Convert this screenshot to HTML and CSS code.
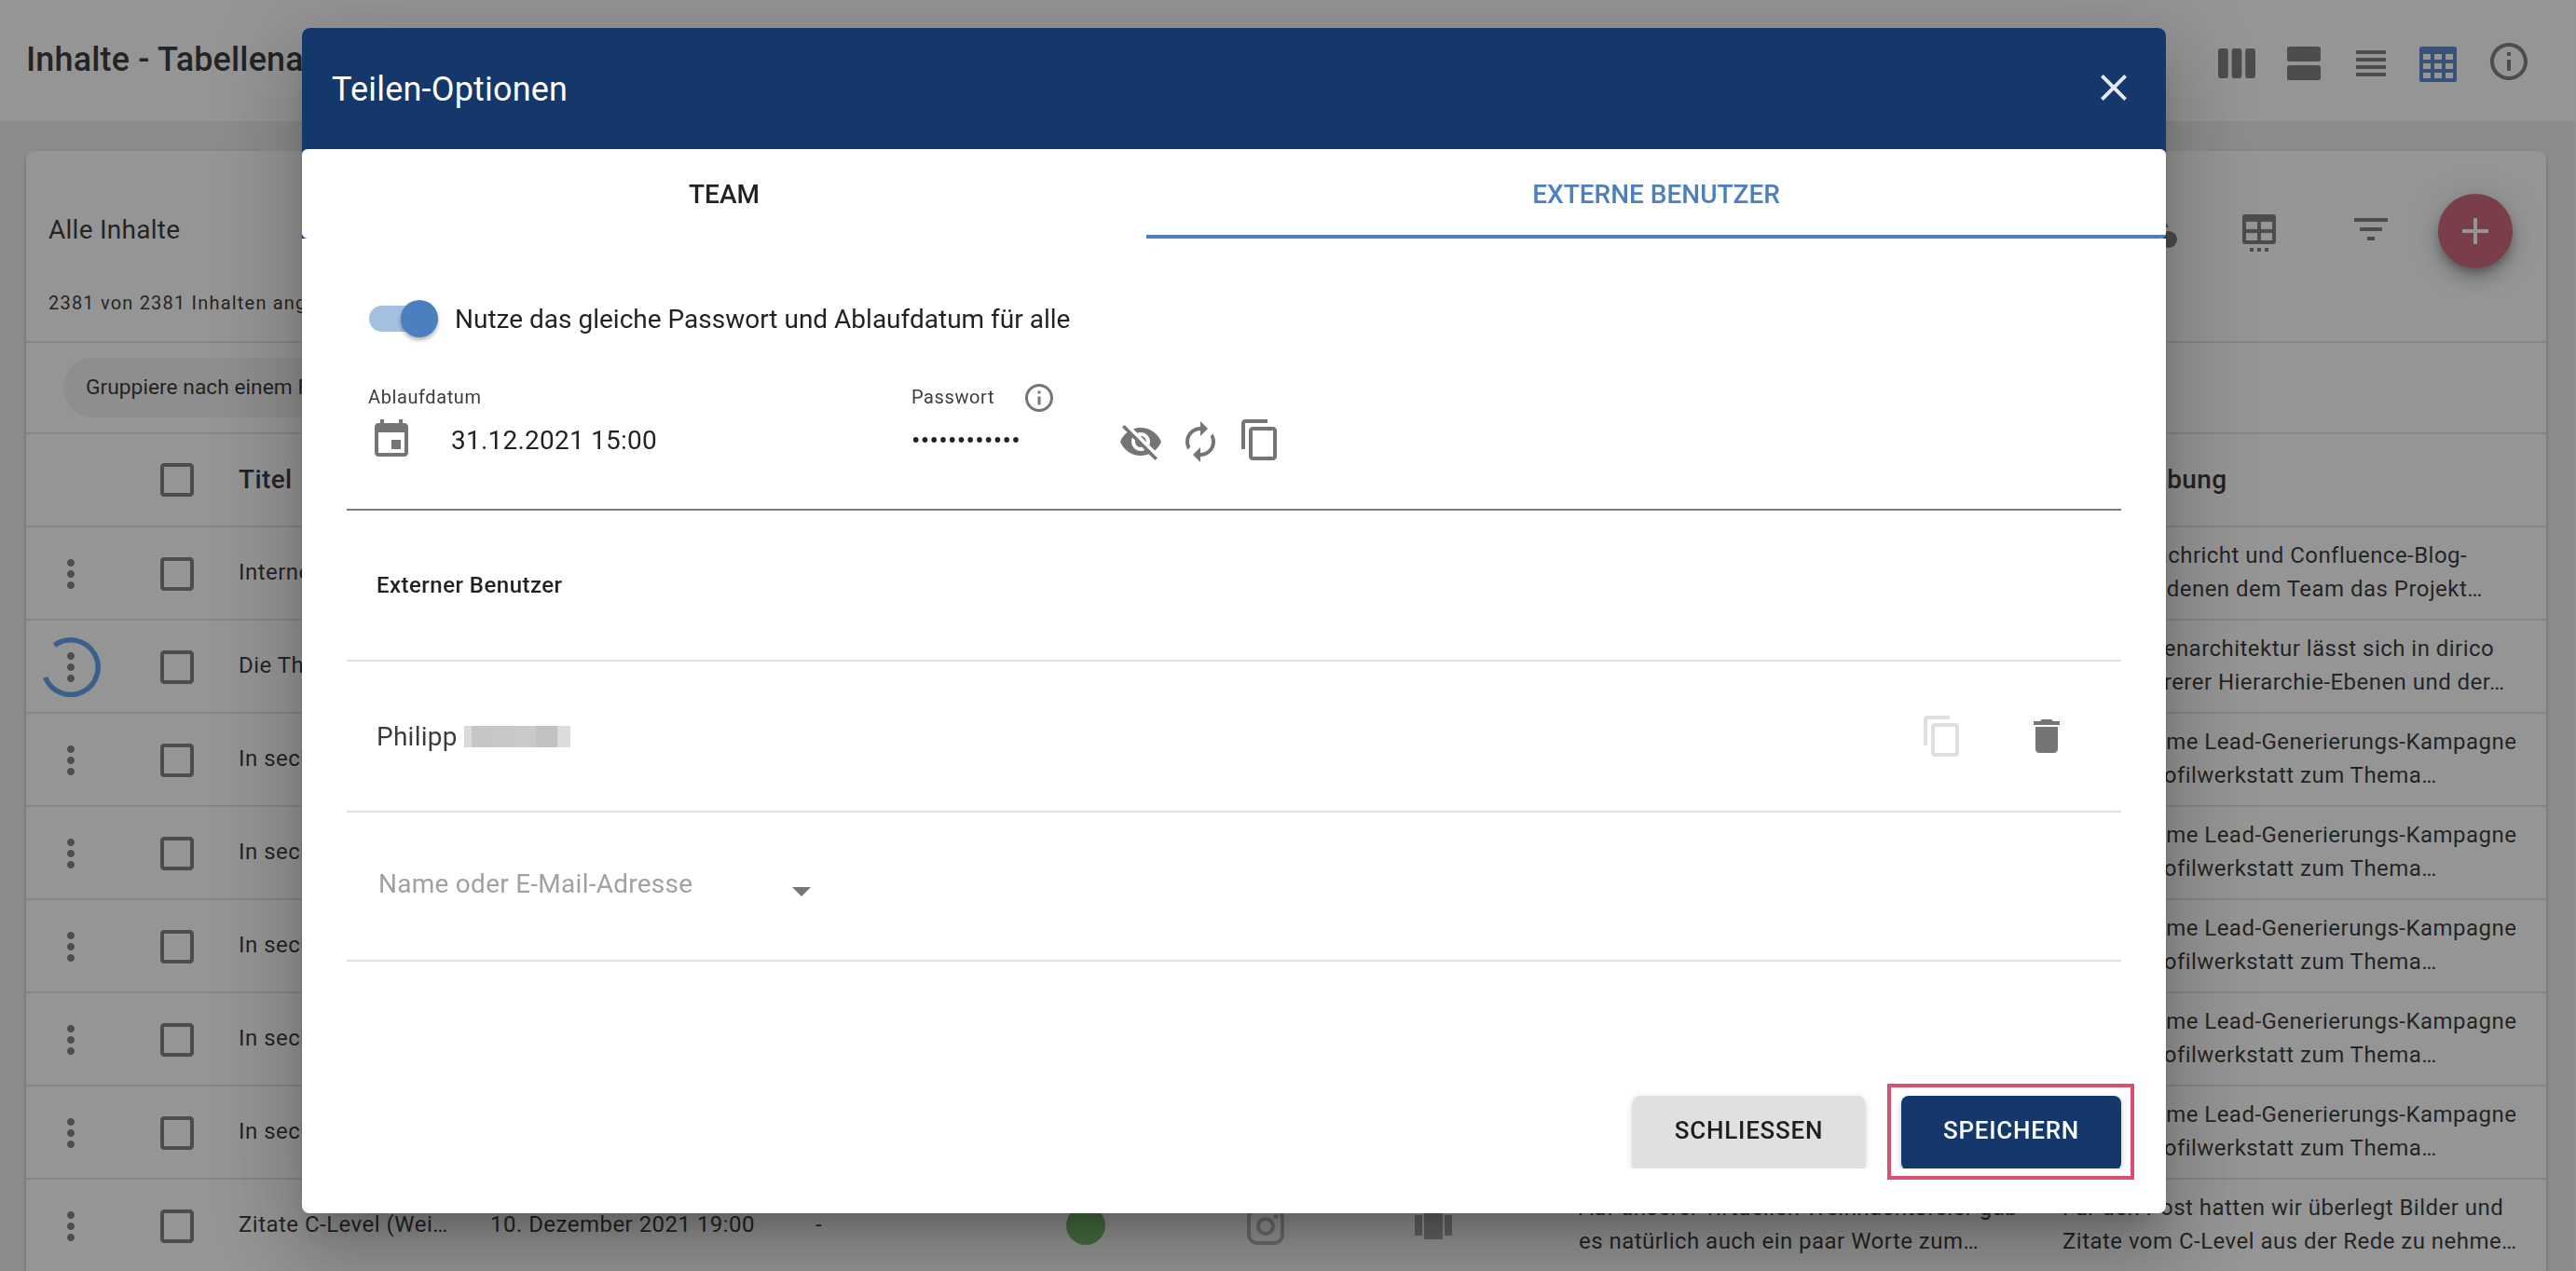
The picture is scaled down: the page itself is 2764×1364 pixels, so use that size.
FILE: index.html
```html
<!DOCTYPE html>
<html lang="de">
<head>
  <meta charset="UTF-8" />
  <title>Inhalte - Tabellenansicht</title>
  <link rel="stylesheet" href="styles.css">
</head>
<body>
  <svg class="sprite">
    <symbol id="dots" viewBox="0 0 24 24"><path d="M12 8c1.1 0 2-.9 2-2s-.9-2-2-2-2 .9-2 2 .9 2 2 2zm0 2c-1.1 0-2 .9-2 2s.9 2 2 2 2-.9 2-2-.9-2-2-2zm0 6c-1.1 0-2 .9-2 2s.9 2 2 2 2-.9 2-2-.9-2-2-2z"/></symbol>
    <symbol id="box" viewBox="0 0 24 24"><path d="M19 5v14H5V5h14m0-2H5c-1.1 0-2 .9-2 2v14c0 1.1.9 2 2 2h14c1.1 0 2-.9 2-2V5c0-1.1-.9-2-2-2z"/></symbol>
    <symbol id="info" viewBox="0 0 24 24"><path d="M11 7h2v2h-2zm0 4h2v6h-2zm1-9C6.48 2 2 6.48 2 12s4.480 10 10 10 10-4.480 10-10S17.520 2 12 2zm0 18c-4.410 0-8-3.590-8-8s3.590-8 8-8 8 3.590 8 8-3.590 8-8 8z"/></symbol>
    <symbol id="copy" viewBox="0 0 24 24"><path d="M16 1H4c-1.1 0-2 .9-2 2v14h2V3h12V1zm3 4H8c-1.1 0-2 .9-2 2v14c0 1.1.9 2 2 2h11c1.1 0 2-.9 2-2V7c0-1.1-.9-2-2-2zm0 16H8V7h11v14z"/></symbol>
  </svg>

  <header class="topbar">
    <h1>Inhalte - Tabellenansicht</h1>
    <div class="views">
      <svg class="icon" viewBox="0 0 24 24"><rect x="2" y="4" width="5.4" height="16" rx="1.500"/><rect x="9.300" y="4" width="5.400" height="16" rx="1.500"/><rect x="16.600" y="4" width="5.400" height="16" rx="1.500"/></svg>
      <svg class="icon" viewBox="0 0 24 24"><rect x="3" y="3" width="18" height="8" rx="1.300"/><rect x="3" y="13" width="18" height="8" rx="1.300"/></svg>
      <svg class="icon" viewBox="0 0 24 24"><path d="M4 5h16v2H4zM4 9h16v2H4zM4 13h16v2H4zM4 17h16v2H4z"/></svg>
      <svg class="icon active" viewBox="0 0 24 24"><path fill-rule="evenodd" d="M3 3h18a1 1 0 0 1 1 1v17a1 1 0 0 1-1 1H3a1 1 0 0 1-1-1V4a1 1 0 0 1 1-1zM4 7v3h4V7zM10 7v3h4V7zM16 7v3h4V7zM4 12v3h4v-3zM10 12v3h4v-3zM16 12v3h4v-3zM4 17v3h4v-3zM10 17v3h4v-3zM16 17v3h4v-3z"/></svg>
      <svg class="icon info"><use href="#info"/></svg>
    </div>
  </header>

  <main class="card">
    <div class="toolbar">
      <div class="heading">
        <h2>Alle Inhalte</h2>
        <p>2381 von 2381 Inhalten angezeigt</p>
      </div>
      <div class="tools">
        <svg class="icon" viewBox="0 0 24 24"><path d="M12 2l-5.500 9h11z"/><circle cx="17.500" cy="17.500" r="4.500"/><path d="M3 13.500h8v8H3z"/></svg>
        <svg class="icon" viewBox="0 0 24 24"><path fill-rule="evenodd" d="M4.500 4h15A1.500 1.500 0 0 1 21 5.500v13a1.500 1.500 0 0 1-1.500 1.500h-15A1.500 1.500 0 0 1 3 18.500v-13A1.500 1.500 0 0 1 4.500 4zM5 8v4h6V8zM13 8v4h6V8zM5 14v4h6v-4zM13 14v4h6v-4zM7 22h2v2H7zM11 22h2v2h-2zM15 22h2v2h-2z"/></svg>
        <svg class="icon" viewBox="0 0 24 24"><path d="M10 18h4v-2h-4v2zM3 6v2h18V6H3zm3 7h12v-2H6v2z"/></svg>
        <button class="fab"><svg class="icon" viewBox="0 0 24 24"><path d="M19 13h-6v6h-2v-6H5v-2h6V5h2v6h6v2z"/></svg></button>
      </div>
    </div>
    <div class="grouping"><span class="chip">Gruppiere nach einem Feld</span></div>

    <div class="row head">
      <svg class="icon check"><use href="#box"/></svg>
      <span class="title">Titel</span>
      <span class="desc">Beschreibung</span>
    </div>
    <div class="row">
      <svg class="icon menu"><use href="#dots"/></svg>
      <svg class="icon check"><use href="#box"/></svg>
      <span class="title">Internes Projekt</span>
      <span class="desc">Intranetnachricht und Confluence-Blog-<br>Beitrag in denen dem Team das Projekt…</span>
    </div>
    <div class="row">
      <div class="menu loading">
        <svg class="icon"><use href="#dots"/></svg>
        <svg class="spinner" viewBox="0 0 64 64"><path d="M14.500 8.500A29.300 29.300 0 1 1 4.600 43"/></svg>
      </div>
      <svg class="icon check"><use href="#box"/></svg>
      <span class="title">Die Themenarchitektur</span>
      <span class="desc">Eine Medienarchitektur lässt sich in dirico<br>nach mehrerer Hierarchie-Ebenen und der…</span>
    </div>
    <div class="row">
      <svg class="icon menu"><use href="#dots"/></svg>
      <svg class="icon check"><use href="#box"/></svg>
      <span class="title">In sechs Schritten</span>
      <span class="desc">Gemeinsame Lead-Generierungs-Kampagne<br>mit der Profilwerkstatt zum Thema…</span>
    </div>
    <div class="row">
      <svg class="icon menu"><use href="#dots"/></svg>
      <svg class="icon check"><use href="#box"/></svg>
      <span class="title">In sechs Schritten</span>
      <span class="desc">Gemeinsame Lead-Generierungs-Kampagne<br>mit der Profilwerkstatt zum Thema…</span>
    </div>
    <div class="row">
      <svg class="icon menu"><use href="#dots"/></svg>
      <svg class="icon check"><use href="#box"/></svg>
      <span class="title">In sechs Schritten</span>
      <span class="desc">Gemeinsame Lead-Generierungs-Kampagne<br>mit der Profilwerkstatt zum Thema…</span>
    </div>
    <div class="row">
      <svg class="icon menu"><use href="#dots"/></svg>
      <svg class="icon check"><use href="#box"/></svg>
      <span class="title">In sechs Schritten</span>
      <span class="desc">Gemeinsame Lead-Generierungs-Kampagne<br>mit der Profilwerkstatt zum Thema…</span>
    </div>
    <div class="row">
      <svg class="icon menu"><use href="#dots"/></svg>
      <svg class="icon check"><use href="#box"/></svg>
      <span class="title">In sechs Schritten</span>
      <span class="desc">Gemeinsame Lead-Generierungs-Kampagne<br>mit der Profilwerkstatt zum Thema…</span>
    </div>
    <div class="row">
      <svg class="icon menu"><use href="#dots"/></svg>
      <svg class="icon check"><use href="#box"/></svg>
      <span class="title">Zitate C-Level (Wei…</span>
      <span class="date">10. Dezember 2021 19:00</span>
      <span class="dash">-</span>
      <span class="status"></span>
      <svg class="channel" viewBox="0 0 40 40"><rect x="2" y="2" width="36" height="36" rx="9"/><circle cx="20" cy="20" r="8"/><circle class="lens" cx="31" cy="9.500" r="2.500"/></svg>
      <svg class="icon format" viewBox="0 0 24 24"><path d="M7 19h10V4H7v15zm-5-2h4V6H2v11zM18 6v11h4V6h-4z"/></svg>
      <span class="text">Auf unserer virtuellen Weihnachtsfeier gab<br>es natürlich auch ein paar Worte zum…</span>
      <span class="desc">Für den Post hatten wir überlegt Bilder und<br>Zitate vom C-Level aus der Rede zu nehme…</span>
    </div>
  </main>

  <div class="overlay">
    <div class="dialog">
      <div class="dialog-head">
        <span>Teilen-Optionen</span>
        <svg class="icon" viewBox="0 0 24 24"><path d="M19 6.410L17.590 5 12 10.590 6.410 5 5 6.410 10.590 12 5 17.590 6.410 19 12 13.410 17.590 19 19 17.590 13.410 12z"/></svg>
      </div>
      <div class="tabs-wrap">
        <div class="tabs">
          <div class="tab">TEAM</div>
          <div class="tab selected">EXTERNE BENUTZER</div>
        </div>
      </div>

      <div class="content">
        <div class="share">
          <div class="switch-line">
            <span class="switch"></span>
            <label>Nutze das gleiche Passwort und Ablaufdatum für alle</label>
          </div>
          <div class="fields">
            <div class="expiry">
              <div class="label">Ablaufdatum</div>
              <div class="value">
                <svg class="icon" viewBox="0 0 24 24"><path d="M17 12h-5v5h5v-5zM16 1v2H8V1H6v2H5c-1.110 0-1.990.9-1.990 2L3 19c0 1.100.890 2 2 2h14c1.100 0 2-.9 2-2V5c0-1.100-.9-2-2-2h-1V1h-2zm3 18H5V8h14v11z"/></svg>
                <span>31.12.2021 15:00</span>
              </div>
            </div>
            <div class="password">
              <div class="label">Passwort <svg class="icon small"><use href="#info"/></svg></div>
              <div class="bullets">••••••••••••</div>
            </div>
            <div class="actions">
              <svg class="icon" viewBox="0 0 24 24"><path d="M12 7c2.760 0 5 2.240 5 5 0 .650-.130 1.260-.360 1.830l2.920 2.920c1.510-1.260 2.700-2.890 3.430-4.750-1.730-4.390-6-7.500-11-7.500-1.400 0-2.740.250-3.980.7l2.160 2.160C10.740 7.130 11.350 7 12 7zM2 4.270l2.280 2.280.460.460C3.080 8.300 1.780 10.020 1 12c1.730 4.390 6 7.500 11 7.500 1.550 0 3.030-.3 4.380-.840l.420.420L19.730 22 21 20.730 3.270 3 2 4.270zM7.530 9.800l1.550 1.550c-.050.210-.080.430-.080.650 0 1.660 1.340 3 3 3 .220 0 .440-.030.650-.080l1.550 1.550c-.670.330-1.410.530-2.200.530-2.760 0-5-2.240-5-5 0-.790.2-1.530.530-2.200zm4.310-.780l3.150 3.150.020-.160c0-1.660-1.340-3-3-3l-.170.010z"/></svg>
              <svg class="icon" viewBox="0 0 24 24"><path d="M12 6v3l4-4-4-4v3c-4.420 0-8 3.580-8 8 0 1.570.460 3.030 1.240 4.260L6.700 14.800c-.450-.830-.7-1.790-.7-2.800 0-3.310 2.690-6 6-6zm6.760 1.740L17.300 9.200c.440.840.7 1.790.7 2.800 0 3.310-2.690 6-6 6v-3l-4 4 4 4v-3c4.420 0 8-3.580 8-8 0-1.570-.460-3.030-1.240-4.260z"/></svg>
              <svg class="icon raised"><use href="#copy"/></svg>
            </div>
          </div>
        </div>

        <div class="user-head">Externer Benutzer</div>
        <div class="user">
          <span>Philipp</span>
          <span class="masked"><i></i><i></i><i></i><i></i><i></i><i></i></span>
          <svg class="icon disabled"><use href="#copy"/></svg>
          <svg class="icon trash" viewBox="0 0 24 24"><path d="M6 19c0 1.100.9 2 2 2h8c1.100 0 2-.9 2-2V7H6v12zM19 4h-3.500l-1-1h-5l-1 1H5v2h14V4z"/></svg>
        </div>
        <div class="user-add">
          <span>Name oder E-Mail-Adresse</span>
          <svg class="icon" viewBox="0 0 24 24"><path d="M7 10l5 5 5-5z"/></svg>
        </div>
      </div>

      <div class="buttons">
        <div class="clip"><button class="btn">SCHLIESSEN</button></div>
        <div class="marked"><div class="clip"><button class="btn primary">SPEICHERN</button></div></div>
      </div>
    </div>
  </div>
</body>
</html>
```
FILE: styles.css
```css
* { box-sizing: border-box; }

body {
  margin: 0;
  height: 1364px;
  overflow: hidden;
  font-family: Roboto, sans-serif;
  background: #ededed;
  color: rgba(0, 0, 0, 0.87);
  border-right: 1px solid #fafafa;
}

h1, h2, p { margin: 0; }

.sprite { display: none; }

.icon {
  width: 48px;
  height: 48px;
  fill: #757575;
  flex: none;
  display: block;
}

/* page behind the dialog */
.topbar {
  height: 130px;
  background: #fff;
  display: flex;
  justify-content: space-between;
  padding: 42px 47px 0 28px;
}

.topbar h1 {
  margin-top: 1px;
  font-size: 36px;
  line-height: 42px;
  font-weight: 500;
  letter-spacing: 0.15px;
}

.views {
  display: flex;
  gap: 24px;
  padding-top: 2px;
}

.views .active { fill: #4b7fc0; }

.views .info { margin: -2px 0 0 4px; }

.card {
  margin: 32px 31px 0 28px;
  height: 1240px;
  background: #fff;
  border-radius: 8px;
  box-shadow: 0 2px 4px rgba(0, 0, 0, 0.25);
}

.toolbar {
  height: 206px;
  border-bottom: 2px solid #e0e0e0;
  display: flex;
  justify-content: space-between;
  padding: 0 36px 0 24px;
}

.heading h2 {
  margin-top: 67px;
  font-size: 28px;
  line-height: 36px;
  font-weight: 400;
  letter-spacing: 0.25px;
}

.heading p {
  margin-top: 46px;
  font-size: 20px;
  line-height: 28px;
  letter-spacing: 1.2px;
}

.tools {
  display: flex;
  align-items: flex-start;
  padding-top: 60px;
}

.tools .icon { margin-right: 60px; }

.tools .icon:nth-child(2) { margin-right: 72px; }

.tools .icon:nth-child(3) { margin-right: 48px; }

.fab {
  width: 80px;
  height: 80px;
  margin-top: -14px;
  padding: 16px;
  border: none;
  border-radius: 50%;
  background: #cc5872;
  box-shadow: 0 6px 10px -2px rgba(0, 0, 0, 0.3), 0 12px 20px rgba(0, 0, 0, 0.2), 0 2px 36px rgba(0, 0, 0, 0.14);
}

.fab .icon { fill: #fff; margin: 0; }

.grouping {
  height: 98px;
  border-bottom: 2px solid #e0e0e0;
  padding: 16px 40px;
}

.chip {
  display: inline-block;
  height: 64px;
  padding: 0 24px;
  border-radius: 32px;
  background: #f1f1f1;
  font-size: 22.8px;
  line-height: 64px;
}

.row {
  height: 100px;
  border-bottom: 2px solid #e0e0e0;
  display: grid;
  grid-template-columns: 96px 132px 270px 349px 193px 194px 192px 240px 519px 1fr;
  grid-template-rows: 96px;
  align-items: center;
  font-size: 24px;
  line-height: 36px;
  white-space: nowrap;
  letter-spacing: 0.47px;
}

.row > * { grid-row: 1; }

.head {
  grid-template-rows: 98px;
  font-size: 28px;
  font-weight: 500;
  letter-spacing: 0.4px;
}

.row .menu { grid-column: 1; justify-self: center; margin-top: 4px; }
.row .check { grid-column: 2; justify-self: center; margin-top: 4px; }
.head .check { margin-top: -1px; }
.row .title { grid-column: 3; }
.row .date { grid-column: 4; }
.row .dash { grid-column: 5; }
.row .text { grid-column: 9; }
.row .desc { grid-column: 10; }

.loading { position: relative; }

.spinner {
  position: absolute;
  left: -8px;
  top: -8px;
  width: 64px;
  height: 64px;
  fill: none;
  stroke: #4f97ec;
  stroke-width: 5.5;
}

.status {
  grid-column: 6;
  justify-self: center;
  width: 42px;
  height: 42px;
  margin-top: 2px;
  border-radius: 50%;
  background: #6ab55e;
}

.channel {
  grid-column: 7;
  justify-self: center;
  width: 40px;
  height: 40px;
  margin-top: 4px;
  fill: none;
  stroke: #b4b4b4;
  stroke-width: 4;
}

.channel .lens { fill: #b4b4b4; stroke: none; }

.row .format {
  grid-column: 8;
  margin: 4px 0 0 60px;
  fill: #a2a2a2;
}

/* dialog */
.overlay {
  position: fixed;
  inset: 0;
  background: rgba(33, 33, 33, 0.48);
}

.dialog {
  width: 2000px;
  height: 1272px;
  margin: 30px 0 0 324px;
  background: #fff;
  border-radius: 8px;
  overflow: hidden;
  box-shadow: 0 22px 30px -14px rgba(0, 0, 0, 0.2), 0 48px 76px 6px rgba(0, 0, 0, 0.14), 0 18px 92px 16px rgba(0, 0, 0, 0.12);
}

.dialog-head {
  height: 130px;
  padding: 2px 32px 0;
  background: #14386b;
  color: #fff;
  display: flex;
  align-items: center;
  justify-content: space-between;
  font-size: 36px;
  letter-spacing: 0.2px;
}

.dialog-head .icon { fill: #e3e7ed; margin-top: -4px; }

.tabs-wrap { background: #14386b; }

.tabs {
  display: flex;
  height: 96px;
  background: #fff;
  border-radius: 6px;
  overflow: hidden;
}

.tab {
  width: 906px;
  line-height: 98px;
  text-align: center;
  font-size: 28px;
  font-weight: 500;
}

.tab.selected {
  flex: 1;
  color: #4b7fc0;
  border-bottom: 4px solid #4b7fc0;
}

.content { padding: 0 48px; }

.share {
  height: 292px;
  border-bottom: 2px solid #7c7c7c;
  padding: 66px 22px 0;
}

.switch-line {
  display: flex;
  align-items: center;
  height: 40px;
  font-size: 28px;
}

.switch {
  width: 74px;
  height: 28px;
  margin: 0 18px 0 2px;
  border-radius: 14px;
  background: #a5bfe0;
  display: flex;
  align-items: center;
  justify-content: flex-end;
}

.switch::after {
  content: "";
  width: 40px;
  height: 40px;
  border-radius: 50%;
  background: #4b7fc0;
  box-shadow: 0 3px 4px rgba(0, 0, 0, 0.3);
}

.fields {
  display: flex;
  margin-top: 46px;
}

.label {
  display: flex;
  align-items: center;
  height: 36px;
  font-size: 20px;
  letter-spacing: 0.6px;
  color: #3c3c3c;
}

.expiry { width: 584px; }

.expiry .label { padding: 0 0 1px 1px; }

.expiry .value {
  display: flex;
  align-items: center;
  height: 48px;
  margin-top: 4px;
  padding-left: 2px;
  font-size: 28px;
  letter-spacing: 0.22px;
}

.expiry .value .icon { margin-right: 40px; }

.password { width: 222px; }

.small {
  width: 36px;
  height: 36px;
  margin: 2px 0 0 30px;
}

.bullets {
  margin-top: 13px;
  font-size: 28px;
  line-height: 32px;
  letter-spacing: 0.3px;
}

.actions {
  display: flex;
  gap: 16px;
  padding-top: 42px;
}

.actions .raised { margin-top: -2px; }

.user-head, .user, .user-add {
  padding: 0 32px;
  border-bottom: 2px solid #e0e0e0;
  display: flex;
  align-items: center;
}

.user-head {
  height: 162px;
  font-size: 24px;
  font-weight: 500;
  letter-spacing: 0.47px;
}

.user {
  height: 162px;
  font-size: 28px;
  letter-spacing: 0.25px;
  color: #3c3c3c;
}

.masked {
  display: flex;
  height: 23px;
  margin-left: 7px;
}

.masked i { width: 23px; background: #c6c6c6; }
.masked i:first-child { width: 8px; background: #dadada; }
.masked i:nth-child(3) { background: #c8c8c8; }
.masked i:nth-child(4) { background: #cacaca; }
.masked i:nth-child(5) { background: #c1c1c1; }
.masked i:last-child { width: 14px; background: #dcdcdc; }

.user .disabled { margin-left: auto; fill: #dfdfdf; }

.user .trash { margin: 0 24px 0 64px; }

.user-add {
  height: 160px;
  padding: 0 34px 6px;
  font-size: 28px;
  letter-spacing: 0.26px;
  color: #a1a1a1;
}

.user-add span { width: 430px; }

.user-add .icon { margin-top: 16px; }

.buttons {
  display: flex;
  justify-content: flex-end;
  align-items: flex-start;
  padding: 132px 34px 0 0;
}

.clip {
  height: 90px;
  padding: 12px 8px 0;
  overflow: hidden;
}

.btn {
  width: 249px;
  height: 80px;
  padding: 0 0 6px;
  border: none;
  border-radius: 8px;
  background: #e0e0e0;
  color: rgba(0, 0, 0, 0.87);
  font-family: Roboto, sans-serif;
  font-size: 26px;
  font-weight: 500;
  letter-spacing: 0.75px;
  box-shadow: 0 3px 4px -1px rgba(0, 0, 0, 0.2), 0 2px 8px rgba(0, 0, 0, 0.16);
}

.btn.primary {
  width: 236px;
  background: #14386b;
  color: #fff;
}

.marked {
  height: 103px;
  margin: -1px 0 0 16px;
  border: 4px solid #d94f70;
}

.marked .clip { padding: 9px 10px 0 11px; height: 87px; }
```
